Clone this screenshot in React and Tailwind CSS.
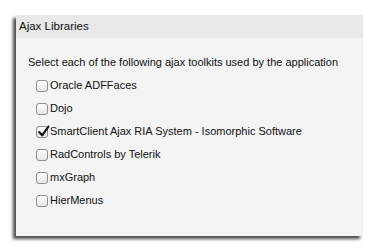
import React, { useState } from 'react';

const libs = [
  'Oracle ADFFaces',
  'Dojo',
  'SmartClient Ajax RIA System - Isomorphic Software',
  'RadControls by Telerik',
  'mxGraph',
  'HierMenus',
];

const Check = ({ on, onClick }) => (
  <button
    onClick={onClick}
    className="relative w-[12px] h-[12px] rounded-[3px] border border-[#8e8e8e] bg-gradient-to-b from-white to-[#e6e6e6] shrink-0"
  >
    {on && (
      <svg viewBox="0 0 12 12" className="absolute left-[0px] top-[-2px] w-[13px] h-[13px]">
        <path d="M2 6.5 L4.8 9.5 L10.5 1.5" fill="none" stroke="#111" strokeWidth="2" strokeLinecap="round" strokeLinejoin="round" />
      </svg>
    )}
  </button>
);

export default function App() {
  const [checked, setChecked] = useState([false, false, true, false, false, false]);

  const toggle = (i) => setChecked(checked.map((c, j) => (j === i ? !c : c)));

  return (
    <div className="w-[378px] h-[252px] bg-white pt-[15px] pl-[16px]" style={{ fontFamily: '"Liberation Sans", Arial, sans-serif' }}>
      <div className="w-[347px] h-[221px] bg-[#f4f4f4] shadow-[-3px_3px_3px_rgba(0,0,0,0.7)] flex flex-col">
        <div className="h-[23px] bg-[#e8e8e8] flex items-center pl-[3px] text-[11.5px] text-[#111]">Ajax Libraries</div>
        <div className="pl-[12px] pt-[16px] text-[11px] text-[#111]">Select each of the following ajax toolkits used by the application</div>
        <div className="flex flex-col gap-[11px] pl-[20px] pt-[9px]">
          {libs.map((l, i) => (
            <div key={l} className="flex items-center gap-[2px] h-[12px] text-[11px] text-[#111]">
              <Check on={checked[i]} onClick={() => toggle(i)} />
              <span>{l}</span>
            </div>
          ))}
        </div>
      </div>
    </div>
  );
}
